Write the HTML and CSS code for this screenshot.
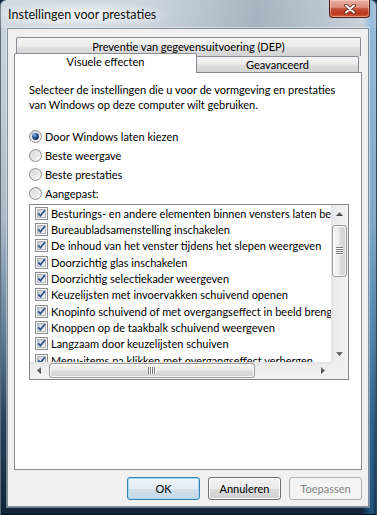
FILE: index.html
```html
<!DOCTYPE html>
<html lang="nl">
<head>
<meta charset="utf-8">
<title>Instellingen voor prestaties</title>
<link rel="stylesheet" href="styles.css">
</head>
<body>
<svg class="defs" width="0" height="0" aria-hidden="true">
  <defs>
    <linearGradient id="cbin" x1="0" y1="0" x2="1" y2="1">
      <stop offset="0" stop-color="#c2c6cc"/>
      <stop offset="1" stop-color="#f6f6f6"/>
    </linearGradient>
    <linearGradient id="rbg" x1="0" y1="0" x2="1" y2="1">
      <stop offset="0" stop-color="#cfcfcf"/>
      <stop offset="1" stop-color="#fcfcfc"/>
    </linearGradient>
    <radialGradient id="rdot" cx="0.35" cy="0.3" r="0.75">
      <stop offset="0" stop-color="#9cc2e8"/>
      <stop offset="0.45" stop-color="#2b5fa3"/>
      <stop offset="1" stop-color="#0e2850"/>
    </radialGradient>
    <linearGradient id="arr" x1="0" y1="0" x2="0" y2="1">
      <stop offset="0" stop-color="#7a7a7a"/>
      <stop offset="1" stop-color="#3f3f3f"/>
    </linearGradient>
    <symbol id="cb" viewBox="0 0 13 13">
      <rect x="0.5" y="0.5" width="12" height="12" fill="#f5f5f5" stroke="#8e8f8f"/>
      <rect x="2.5" y="2.5" width="8" height="8" fill="url(#cbin)" stroke="#b4b8be"/>
      <path d="M3.3 6.4 L5.4 8.8 L9.9 3.3" fill="none" stroke="#2d4c8a" stroke-width="1.7"/>
    </symbol>
    <symbol id="rb" viewBox="0 0 13 13">
      <circle cx="6.5" cy="6.5" r="6" fill="url(#rbg)" stroke="#8f8f8f"/>
      <circle cx="6.5" cy="6.5" r="4.3" fill="none" stroke="#f4f4f4" stroke-width="0.8" opacity="0.8"/>
    </symbol>
    <symbol id="rbsel" viewBox="0 0 13 13">
      <circle cx="6.5" cy="6.5" r="6" fill="url(#rbg)" stroke="#8f8f8f"/>
      <circle cx="6.5" cy="6.5" r="3.4" fill="url(#rdot)"/>
    </symbol>
  </defs>
</svg>

<div class="window">
  <div class="titlebar">
    <span class="title">Instellingen voor prestaties</span>
    <div class="close">
      <svg width="12" height="10" viewBox="0 0 12 10">
        <path d="M2 1.5 L10 8.5 M10 1.5 L2 8.5" stroke="#5e2418" stroke-width="3.6" stroke-linecap="round"/>
        <path d="M2 1.5 L10 8.5 M10 1.5 L2 8.5" stroke="#ffffff" stroke-width="2" stroke-linecap="round"/>
      </svg>
    </div>
  </div>

  <div class="client">
    <div class="tabctl">
      <div class="row1">
        <div class="tab back">Preventie van gegevensuitvoering (DEP)</div>
      </div>
      <div class="row2">
        <div class="tab sel">Visuele effecten</div>
        <div class="tab adv">Geavanceerd</div>
      </div>
      <div class="panel">
        <p class="desc">Selecteer de instellingen die u voor de vormgeving en prestaties van Windows op deze computer wilt gebruiken.</p>
        <div class="radios">
          <div class="radio"><svg class="rbox" width="13" height="13"><use href="#rbsel"/></svg><span>Door Windows laten kiezen</span></div>
          <div class="radio"><svg class="rbox" width="13" height="13"><use href="#rb"/></svg><span>Beste weergave</span></div>
          <div class="radio"><svg class="rbox" width="13" height="13"><use href="#rb"/></svg><span>Beste prestaties</span></div>
          <div class="radio"><svg class="rbox" width="13" height="13"><use href="#rb"/></svg><span>Aangepast:</span></div>
        </div>
        <div class="listbox">
          <div class="items">
            <div class="item"><svg class="cbox" width="13" height="13"><use href="#cb"/></svg><span>Besturings- en andere elementen binnen vensters laten bewegen</span></div>
            <div class="item"><svg class="cbox" width="13" height="13"><use href="#cb"/></svg><span>Bureaubladsamenstelling inschakelen</span></div>
            <div class="item"><svg class="cbox" width="13" height="13"><use href="#cb"/></svg><span>De inhoud van het venster tijdens het slepen weergeven</span></div>
            <div class="item"><svg class="cbox" width="13" height="13"><use href="#cb"/></svg><span>Doorzichtig glas inschakelen</span></div>
            <div class="item"><svg class="cbox" width="13" height="13"><use href="#cb"/></svg><span>Doorzichtig selectiekader weergeven</span></div>
            <div class="item"><svg class="cbox" width="13" height="13"><use href="#cb"/></svg><span>Keuzelijsten met invoervakken schuivend openen</span></div>
            <div class="item"><svg class="cbox" width="13" height="13"><use href="#cb"/></svg><span>Knopinfo schuivend of met overgangseffect in beeld brengen</span></div>
            <div class="item"><svg class="cbox" width="13" height="13"><use href="#cb"/></svg><span>Knoppen op de taakbalk schuivend weergeven</span></div>
            <div class="item"><svg class="cbox" width="13" height="13"><use href="#cb"/></svg><span>Langzaam door keuzelijsten schuiven</span></div>
            <div class="item"><svg class="cbox" width="13" height="13"><use href="#cb"/></svg><span>Menu-items na klikken met overgangseffect verbergen</span></div>
          </div>
          <div class="vscroll">
            <div class="sbtn"><svg width="7" height="4" viewBox="0 0 7 4"><polygon points="0,4 3.5,0 7,4" fill="url(#arr)"/></svg></div>
            <div class="vtrack">
              <div class="vthumb">
                <svg width="7" height="8" viewBox="0 0 7 8">
                  <path d="M0 0.5 H7 M0 2.5 H7 M0 4.5 H7 M0 6.5 H7" stroke="#7a7a7a" stroke-width="1"/>
                  <path d="M0 1.5 H7 M0 3.5 H7 M0 5.5 H7 M0 7.5 H7" stroke="#ffffff" stroke-width="1"/>
                </svg>
              </div>
            </div>
            <div class="sbtn"><svg width="7" height="4" viewBox="0 0 7 4"><polygon points="0,0 7,0 3.5,4" fill="url(#arr)"/></svg></div>
          </div>
          <div class="hscroll">
            <div class="sbtn"><svg width="4" height="7" viewBox="0 0 4 7"><polygon points="4,0 4,7 0,3.5" fill="url(#arr)"/></svg></div>
            <div class="htrack">
              <div class="hthumb">
                <svg width="8" height="7" viewBox="0 0 8 7">
                  <path d="M0.5 0 V7 M2.5 0 V7 M4.5 0 V7 M6.5 0 V7" stroke="#7a7a7a" stroke-width="1"/>
                  <path d="M1.5 0 V7 M3.5 0 V7 M5.5 0 V7 M7.5 0 V7" stroke="#ffffff" stroke-width="1"/>
                </svg>
              </div>
            </div>
            <div class="sbtn"><svg width="4" height="7" viewBox="0 0 4 7"><polygon points="0,0 4,3.5 0,7" fill="url(#arr)"/></svg></div>
          </div>
          <div class="corner"></div>
        </div>
      </div>
    </div>
    <div class="buttons">
      <div class="btn default">OK</div>
      <div class="btn">Annuleren</div>
      <div class="btn disabled">Toepassen</div>
    </div>
  </div>
</div>
</body>
</html>
```

FILE: styles.css
```css
* { box-sizing: border-box; }

html, body {
  margin: 0;
  padding: 0;
}

body {
  width: 377px;
  height: 515px;
  overflow: hidden;
  font-family: Lato, "Liberation Sans", sans-serif;
  font-size: 11px;
  color: #000;
  background: #10233a;
}

.defs {
  display: block;
  width: 0;
  height: 0;
  overflow: hidden;
}

.window {
  width: 377px;
  height: 515px;
  display: flex;
  flex-direction: column;
  border-radius: 6px 6px 0 0;
  background:
    linear-gradient(to right, rgba(255,255,255,0) 362px, rgba(60,150,215,0.45) 372px, rgba(20,60,100,0.15) 377px),
    linear-gradient(to bottom, #cdd6df 0, #c3ced8 80px, #aab9c7 220px, #62809a 330px, #29445e 420px, #10233a 515px);
  box-shadow: inset 1px 0 0 #5d6c79, inset -1px 0 0 #33475a, inset 0 -1px 0 #08121e;
}

.titlebar {
  height: 28px;
  flex: none;
  display: flex;
  align-items: flex-start;
  padding: 0 7px 0 8px;
  border-radius: 6px 6px 0 0;
  background:
    radial-gradient(ellipse 95px 15px at 80px 15px, rgba(255,255,255,0.7), rgba(255,255,255,0)),
    linear-gradient(to right, rgba(255,255,255,0.12) 0, rgba(255,255,255,0) 40%, rgba(70,95,120,0.28) 68%, rgba(70,95,120,0.12) 86%, rgba(255,255,255,0.1) 100%);
}

.title {
  padding-top: 7px;
  line-height: 16px;
  font-size: 12.6px;
  color: #111;
  text-shadow: 0 0 6px rgba(255,255,255,0.9);
}

.close {
  margin-left: auto;
  width: 41px;
  height: 18px;
  display: flex;
  align-items: center;
  justify-content: center;
  border: 1px solid #5a1d14;
  border-top: none;
  border-radius: 0 0 4px 4px;
  background: linear-gradient(to bottom, #eab1a3 0%, #dc8e7c 42%, #c4503a 52%, #b9381f 80%, #d6633f 100%);
  box-shadow: inset 0 0 0 1px rgba(255,220,210,0.45);
}

.close svg { display: block; }

.client {
  flex: none;
  width: 362px;
  height: 479px;
  margin: 0 8px 0 7px;
  border: 1px solid #7f8f9c;
  background: #f0f0f0;
  box-shadow: 0 0 0 1px rgba(255,255,255,0.4);
  display: flex;
  flex-direction: column;
}

.tabctl {
  margin: 8px 6px 0 6px;
}

.tab {
  border: 1px solid #898c95;
  border-bottom: none;
  border-radius: 2px 2px 0 0;
  text-align: center;
  white-space: nowrap;
  background: linear-gradient(to bottom, #f4f4f4 0%, #ececec 45%, #dedede 55%, #d3d3d3 100%);
}

.row1 { height: 19px; }

.tab.back {
  height: 19px;
  margin: 0 1px 0 2px;
  line-height: 18px;
}

.row2 {
  height: 16px;
  display: flex;
}

.tab.sel {
  width: 183px;
  height: 20px;
  margin-top: -3px;
  line-height: 16px;
  padding-bottom: 3px;
  background: #fff;
  position: relative;
  z-index: 2;
}

.tab.adv {
  width: 163px;
  height: 16px;
  margin-left: -1px;
  line-height: 15px;
}

.panel {
  height: 398px;
  border: 1px solid #898c95;
  background: #fff;
  padding: 9px 12px 0 14px;
}

.desc {
  margin: 0;
  width: 316px;
  line-height: 15px;
}

.radios {
  margin-top: 15px;
}

.radio {
  height: 19px;
  display: flex;
  align-items: center;
}

.rbox {
  flex: none;
  display: block;
  margin-right: 3px;
}

.listbox {
  margin-top: 1px;
  width: 320px;
  height: 176px;
  border: 1px solid #828790;
  display: grid;
  grid-template-columns: 1fr 17px;
  grid-template-rows: 1fr 17px;
}

.items {
  overflow: hidden;
  background: #fff;
}

.item {
  height: 16.33px;
  display: flex;
  align-items: center;
  padding-left: 5px;
  white-space: nowrap;
}

.cbox {
  flex: none;
  display: block;
  margin-right: 3px;
}

.sbtn {
  width: 17px;
  height: 17px;
  flex: none;
  display: flex;
  align-items: center;
  justify-content: center;
}

.sbtn svg { display: block; }

.vscroll {
  display: flex;
  flex-direction: column;
  background: linear-gradient(to right, #e2e2e2 0, #ededed 25%, #f3f3f3 100%);
}

.vtrack {
  flex: 1;
  padding: 3px 1px 0 1px;
}

.vthumb {
  height: 52px;
  border: 1px solid #9a9a9a;
  border-radius: 3px;
  background: linear-gradient(to right, #f6f6f6 0%, #ececec 45%, #dcdcdc 55%, #d2d2d2 100%);
  box-shadow: inset 0 0 0 1px rgba(255,255,255,0.8);
  display: flex;
  align-items: center;
  justify-content: center;
}

.vthumb svg, .hthumb svg { display: block; }

.hscroll {
  display: flex;
  background: linear-gradient(to bottom, #e2e2e2 0, #ededed 25%, #f3f3f3 100%);
}

.htrack {
  flex: 1;
  padding: 1px 0 1px 2px;
}

.hthumb {
  width: 206px;
  height: 15px;
  border: 1px solid #9a9a9a;
  border-radius: 3px;
  background: linear-gradient(to bottom, #f6f6f6 0%, #ececec 45%, #dcdcdc 55%, #d2d2d2 100%);
  box-shadow: inset 0 0 0 1px rgba(255,255,255,0.8);
  display: flex;
  align-items: center;
  justify-content: center;
}

.corner {
  background: #f0f0f0;
}

.buttons {
  display: flex;
  justify-content: flex-end;
  gap: 8px;
  margin: 7px 6px 0 0;
}

.btn {
  width: 73px;
  height: 23px;
  border: 1px solid #707070;
  border-radius: 3px;
  line-height: 21px;
  text-align: center;
  background: linear-gradient(to bottom, #f2f2f2 0%, #ebebeb 50%, #dddddd 50%, #cfcfcf 100%);
  box-shadow: inset 0 0 0 1px rgba(255,255,255,0.85);
}

.btn.default {
  border-color: #3c7fb1;
  background: linear-gradient(to bottom, #eef5fa 0%, #e3edf4 50%, #d2e1ec 50%, #c6d8e6 100%);
  box-shadow: inset 0 0 0 1px #9edcf8;
}

.btn.disabled {
  border-color: #adb2b5;
  background: #f4f4f4;
  box-shadow: none;
  color: #838383;
}
```
